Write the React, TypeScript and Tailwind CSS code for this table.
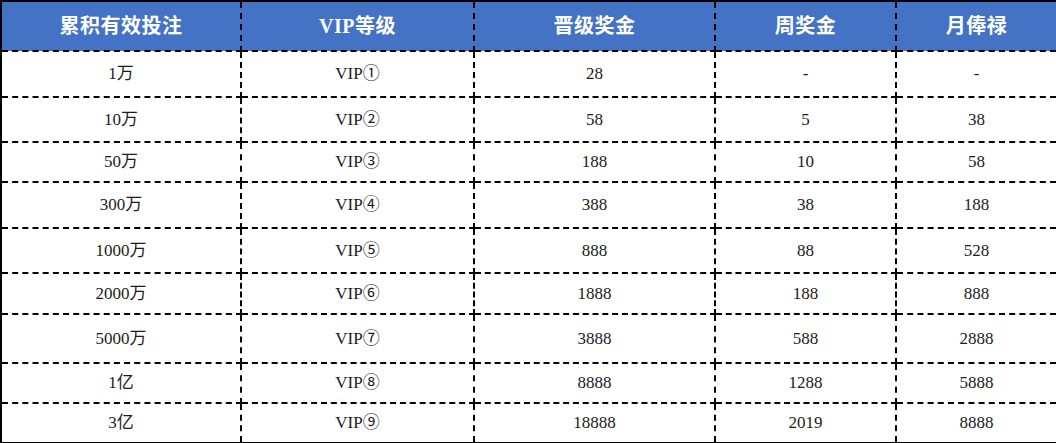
import React from 'react';

const rows = [
  { total: '1万', level: 'VIP①', promo: '28', weekly: '-', monthly: '-', h: 'h-[46px]' },
  { total: '10万', level: 'VIP②', promo: '58', weekly: '5', monthly: '38', h: 'h-[45px]' },
  { total: '50万', level: 'VIP③', promo: '188', weekly: '10', monthly: '58', h: 'h-[40px]' },
  { total: '300万', level: 'VIP④', promo: '388', weekly: '38', monthly: '188', h: 'h-[46px]' },
  { total: '1000万', level: 'VIP⑤', promo: '888', weekly: '88', monthly: '528', h: 'h-[45px]' },
  { total: '2000万', level: 'VIP⑥', promo: '1888', weekly: '188', monthly: '888', h: 'h-[41px]' },
  { total: '5000万', level: 'VIP⑦', promo: '3888', weekly: '588', monthly: '2888', h: 'h-[49px]' },
  { total: '1亿', level: 'VIP⑧', promo: '8888', weekly: '1288', monthly: '5888', h: 'h-[40px]' },
  { total: '3亿', level: 'VIP⑨', promo: '18888', weekly: '2019', monthly: '8888', h: 'h-[40px]' },
];

const headers = ['累积有效投注', 'VIP等级', '晋级奖金', '周奖金', '月俸禄'];

export default function App() {
  return (
    <div className="w-[1056px] h-[443px] bg-white">
      <table
        className="w-[1056px] border-collapse border-2 border-solid border-black table-fixed text-center"
        style={{ fontFamily: "'Liberation Serif', 'Noto Sans CJK SC', serif" }}
      >
        <colgroup>
          <col className="w-[240px]" />
          <col className="w-[233px]" />
          <col className="w-[241px]" />
          <col className="w-[181px]" />
          <col className="w-[161px]" />
        </colgroup>
        <thead>
          <tr className="h-[50px] bg-[#4472c4]">
            {headers.map((h) => (
              <th
                key={h}
                className="border-2 border-dashed border-black text-white text-[20px] font-bold tracking-[0.5px] p-0"
              >
                {h}
              </th>
            ))}
          </tr>
        </thead>
        <tbody>
          {rows.map((r) => (
            <tr key={r.total} className={r.h}>
              {[r.total, r.level, r.promo, r.weekly, r.monthly].map((v, i) => (
                <td
                  key={i}
                  className="border-2 border-dashed border-black text-[17px] text-[#1c1c1c] p-0"
                >
                  {v}
                </td>
              ))}
            </tr>
          ))}
        </tbody>
      </table>
    </div>
  );
}
